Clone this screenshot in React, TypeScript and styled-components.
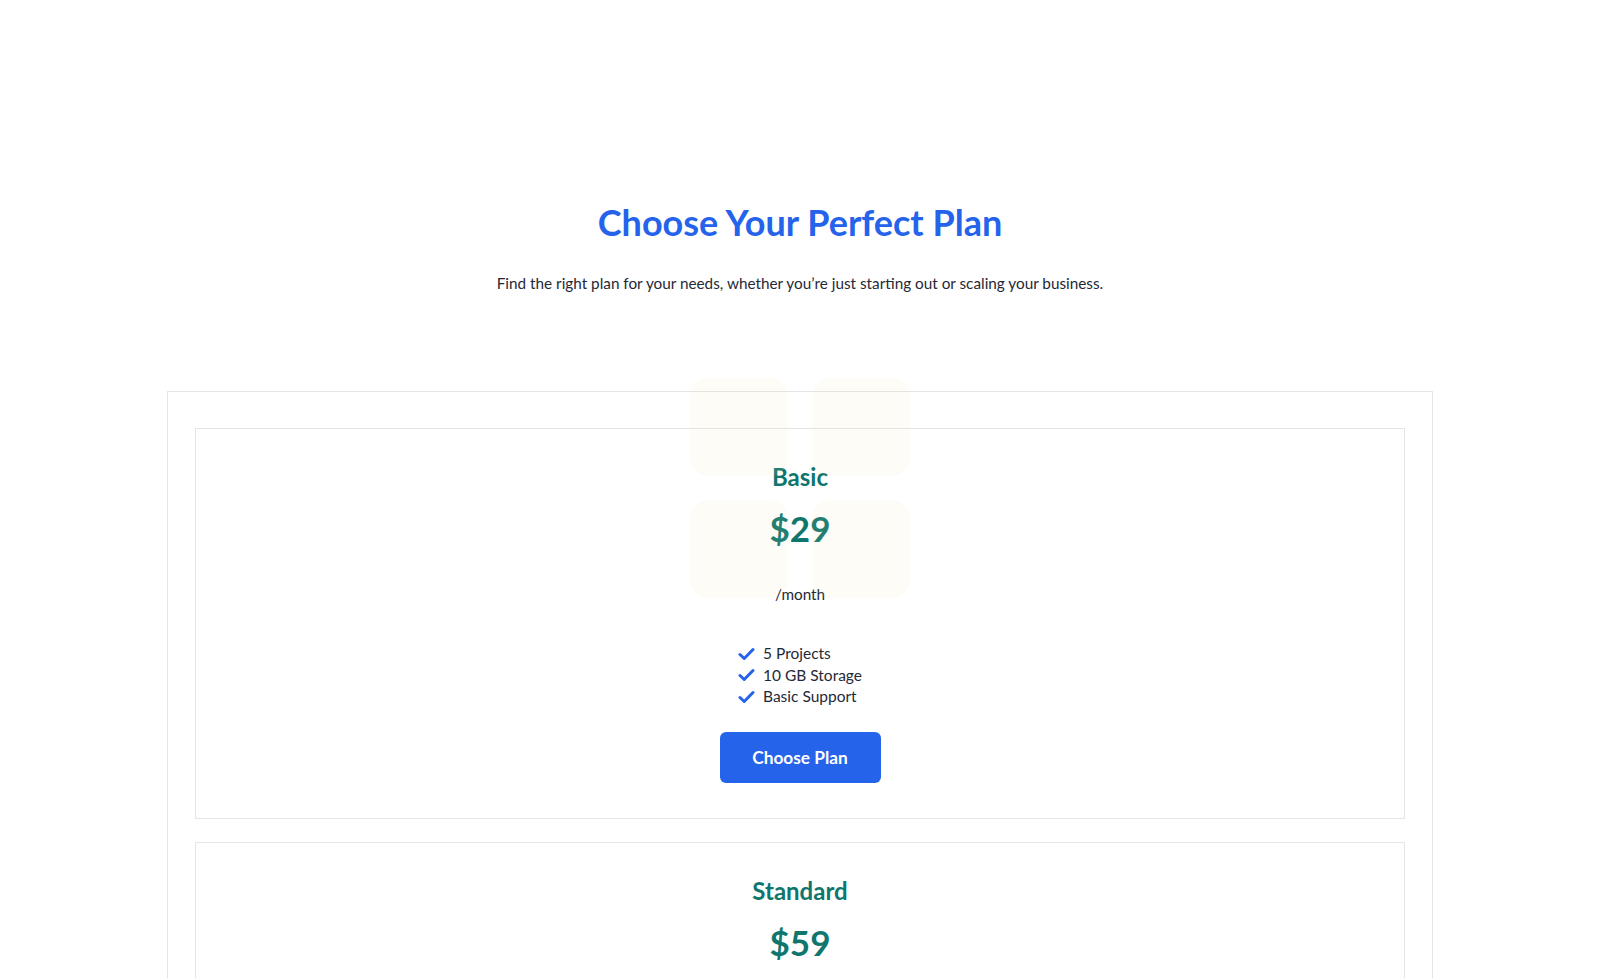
import React from "react";
import styled, { createGlobalStyle } from "styled-components";

const GlobalStyle = createGlobalStyle`
  html, body {
    margin: 0;
    padding: 0;
    background: #ffffff;
  }
  body {
    font-family: "Lato", "Noto Sans", Arial, sans-serif;
    color: #1f2937;
  }
`;

const Page = styled.main`
  padding: 200px 0 80px;
  box-sizing: border-box;
`;

const Header = styled.header`
  text-align: center;
`;

const Title = styled.h1`
  margin: 0;
  font-size: 36px;
  line-height: 44px;
  font-weight: 700;
  color: #2563eb;
`;

const Subtitle = styled.p`
  margin: 28px 0 0;
  font-size: 15.3px;
  line-height: 22px;
  color: #1f2937;
`;

const Plans = styled.section`
  position: relative;
  width: 1266px;
  margin: 97px auto 0;
  padding: 36px 27px;
  box-sizing: border-box;
  border: 1px solid #e5e5e5;
  display: flex;
  flex-direction: column;
  gap: 23px;
`;

const Decor = styled.div`
  position: absolute;
  top: -14px;
  left: 50%;
  transform: translateX(-50%);
  display: grid;
  grid-template-columns: 98px 98px;
  grid-auto-rows: 98px;
  gap: 24px;
  pointer-events: none;
`;

const DecorTile = styled.span`
  border-radius: 18px;
  background: rgba(240, 220, 150, 0.09);
`;

const Card = styled.article`
  border: 1px solid #e5e5e5;
  padding: 34px 24px 35px;
  display: flex;
  flex-direction: column;
  align-items: center;
  text-align: center;
`;

const PlanName = styled.h2`
  margin: 0;
  font-size: 24px;
  line-height: 28px;
  font-weight: 700;
  color: #0f766e;
`;

const Price = styled.div`
  margin-top: 17px;
  font-size: 35px;
  line-height: 40px;
  font-weight: 700;
  color: #0f766e;
`;

const Period = styled.div`
  margin-top: 35px;
  font-size: 15.3px;
  line-height: 22px;
  color: #1f2937;
`;

const Features = styled.ul`
  list-style: none;
  margin: 38px 0 0;
  padding: 0;
  text-align: left;
`;

const Feature = styled.li`
  display: flex;
  align-items: center;
  gap: 8px;
  font-size: 15.5px;
  line-height: 21.5px;
  color: #1f2937;
`;

const Button = styled.button`
  margin-top: 24px;
  width: 161px;
  height: 51px;
  border: none;
  border-radius: 6px;
  background: #2563eb;
  color: #ffffff;
  font-family: inherit;
  font-size: 17.3px;
  font-weight: 700;
  cursor: pointer;
`;

const Check = () => (
  <svg width="17" height="14" viewBox="0 0 17 14" aria-hidden="true">
    <path
      d="M2 7.5 L6.2 11.5 L15 2.5"
      fill="none"
      stroke="#2563eb"
      strokeWidth="3"
      strokeLinecap="round"
      strokeLinejoin="round"
    />
  </svg>
);

const plans = [
  { name: "Basic", price: "$29", features: ["5 Projects", "10 GB Storage", "Basic Support"] },
  { name: "Standard", price: "$59", features: ["20 Projects", "50 GB Storage", "Priority Support"] },
  { name: "Premium", price: "$99", features: ["Unlimited Projects", "200 GB Storage", "24/7 Support"] },
];

const App = () => {
  return (
    <>
      <GlobalStyle />
      <Page>
        <Header>
          <Title>Choose Your Perfect Plan</Title>
          <Subtitle>
            Find the right plan for your needs, whether you’re just starting out or scaling your business.
          </Subtitle>
        </Header>
        <Plans>
          {plans.map((plan) => (
            <Card key={plan.name}>
              <PlanName>{plan.name}</PlanName>
              <Price>{plan.price}</Price>
              <Period>/month</Period>
              <Features>
                {plan.features.map((f) => (
                  <Feature key={f}>
                    <Check />
                    {f}
                  </Feature>
                ))}
              </Features>
              <Button>Choose Plan</Button>
            </Card>
          ))}
          <Decor>
            <DecorTile />
            <DecorTile />
            <DecorTile />
            <DecorTile />
          </Decor>
        </Plans>
      </Page>
    </>
  );
};

export default App;
